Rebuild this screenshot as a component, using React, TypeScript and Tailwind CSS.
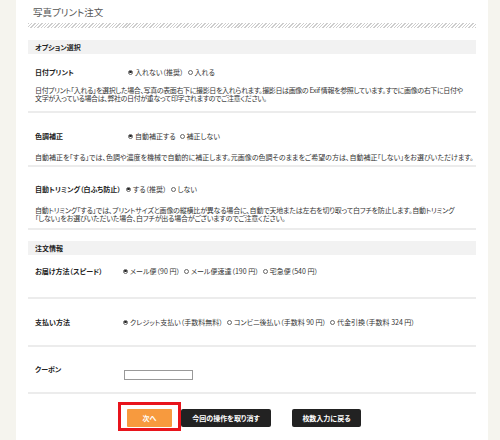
import React from "react";

const Radio = ({ checked }: { checked?: boolean }) => (
  <span className="inline-flex w-[5px] h-[5px] rounded-full border-[0.8px] border-[#666] items-center justify-center shrink-0">
    {checked && <span className="w-[2.4px] h-[2.4px] rounded-full bg-[#222]" />}
  </span>
);

const Opt = ({ checked, children }: { checked?: boolean; children: React.ReactNode }) => (
  <span className="inline-flex items-center gap-[2px] mr-[4px]">
    <Radio checked={checked} />
    <span>{children}</span>
  </span>
);

const Row = ({ label, lw = "w-[93px]", children }: { label: string; lw?: string; children: React.ReactNode }) => (
  <div className="flex items-center h-[10px] whitespace-nowrap">
    <div className={`${lw} font-bold text-[#222]`}>{label}</div>
    <div className="flex items-center">{children}</div>
  </div>
);

export default function App() {
  return (
    <div
      className="flex w-[500px] h-[440px] bg-[#f5f4ee] text-[7px] text-[#333] overflow-hidden"
      style={{ fontFamily: '"Noto Sans CJK JP", "Noto Sans", sans-serif', fontFeatureSettings: '"palt"' }}
    >
      <div className="ml-[16px] w-[472px] bg-white px-[12px]">
        <div className="h-[23px] pl-[5px] pt-[6px] text-[9.5px] leading-[13px] text-[#555]">写真プリント注文</div>
        <div className="h-[5px] bg-[repeating-linear-gradient(-45deg,#cdcdcd_0px,#cdcdcd_1px,#ffffff_1px,#ffffff_2.4px)]" />
        <div className="mt-[12px] h-[14px] bg-[#f2f2f2] pl-[7px] flex items-center font-bold text-[#222]">オプション選択</div>

        <div className="pl-[7px] pt-[13px] pb-[9px] border-b-2 border-[#ececec]">
          <Row label="日付プリント">
            <Opt checked>入れない（推奨）</Opt>
            <Opt>入れる</Opt>
          </Row>
          <div className="mt-[9px] leading-[8px] whitespace-nowrap tracking-[-0.37px]">
            日付プリント「入れる」を選択した場合、写真の表面右下に撮影日を入れられます。撮影日は画像の Exif 情報を参照しています。すでに画像の右下に日付や
            <br />
            文字が入っている場合は、弊社の日付が重なって印字されますのでご注意ください。
          </div>
        </div>

        <div className="pl-[7px] pt-[18px] pb-[4px] border-b-2 border-[#ececec]">
          <Row label="色調補正">
            <Opt checked>自動補正する</Opt>
            <Opt>補正しない</Opt>
          </Row>
          <div className="mt-[12px] leading-[8px] whitespace-nowrap">
            自動補正を「する」では、色調や濃度を機械で自動的に補正します。元画像の色調そのままをご希望の方は、自動補正「しない」をお選びいただけます。
          </div>
        </div>

        <div className="pl-[7px] pt-[17px] pb-[6px] border-b-2 border-[#ececec]">
          <Row label="自動トリミング（白ふち防止）" lw="w-[91px]">
            <Opt checked>する（推奨）</Opt>
            <Opt>しない</Opt>
          </Row>
          <div className="mt-[12px] leading-[8px] whitespace-nowrap tracking-[-0.2px]">
            自動トリミング「する」では、プリントサイズと画像の縦横比が異なる場合に、自動で天地または左右を切り取って白フチを防止します。自動トリミング
            <br />
            「しない」をお選びいただいた場合、白フチが出る場合がございますのでご注意ください。
          </div>
        </div>

        <div className="mt-[11px] h-[14px] bg-[#f2f2f2] pl-[7px] flex items-center font-bold text-[#222]">注文情報</div>

        <div className="pl-[7px] pt-[11px] pb-[21px] border-b-2 border-[#ececec]">
          <Row label="お届け方法（スピード）" lw="w-[88px]">
            <Opt checked>メール便（90 円）</Opt>
            <Opt>メール便速達（190 円）</Opt>
            <Opt>宅急便（540 円）</Opt>
          </Row>
        </div>

        <div className="pl-[7px] pt-[18px] pb-[18px] border-b-2 border-[#ececec]">
          <Row label="支払い方法" lw="w-[88px]">
            <Opt checked>クレジット支払い（手数料無料）</Opt>
            <Opt>コンビニ後払い（手数料 90 円）</Opt>
            <Opt>代金引換（手数料 324 円）</Opt>
          </Row>
        </div>

        <div className="pl-[7px] pt-[17px] pb-[12px] border-b-2 border-[#ececec] flex items-start">
          <div className="w-[89px] font-bold text-[#222] leading-[10px]">クーポン</div>
          <div className="mt-[6px] w-[69px] h-[10px] border border-[#999] bg-white" />
        </div>

        <div className="flex items-start pl-[90px] pt-[8px]">
          <div className="border-[3px] border-[#e8141c] px-[6px] pt-[4px] pb-[1px]">
            <div className="w-[45px] h-[18px] bg-[#f79a3e] text-white font-bold flex items-center justify-center rounded-[1px]">次へ</div>
          </div>
          <div className="mt-[7px] w-[90px] h-[18px] bg-[#222] text-white font-bold flex items-center justify-center rounded-[2px]">今回の操作を取り消す</div>
          <div className="ml-[21px] mt-[7px] w-[69px] h-[18px] bg-[#222] text-white font-bold flex items-center justify-center rounded-[2px]">枚数入力に戻る</div>
        </div>
      </div>
    </div>
  );
}
